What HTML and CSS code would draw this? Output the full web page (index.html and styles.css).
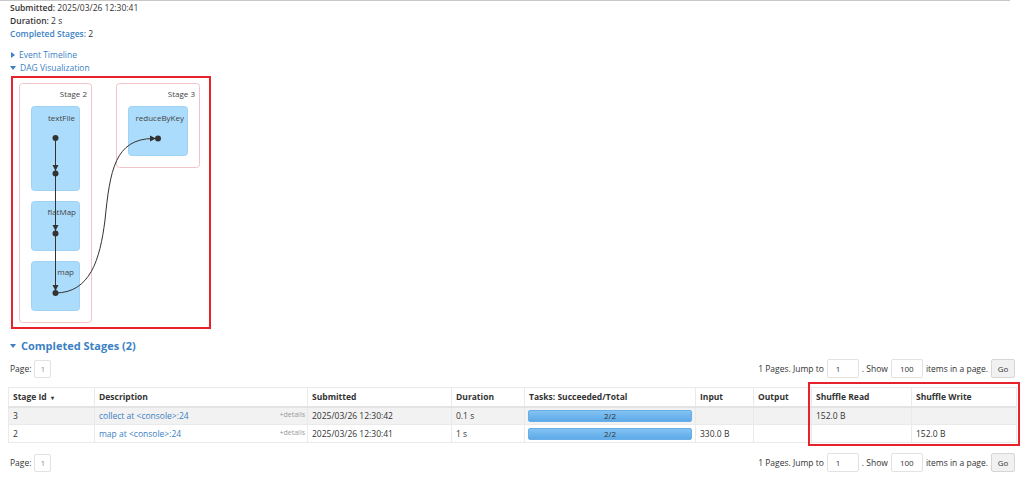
FILE: index.html
```html
<!DOCTYPE html>
<html lang="en">
<head>
    <meta charset="UTF-8">
    <title>Spark Jobs - Details for Job</title>
    <link rel="stylesheet" href="styles.css">
</head>
<body>
<div class="topbar"></div>
<div class="page">
    <ul class="summary">
        <li><strong>Submitted:</strong> 2025/03/26 12:30:41</li>
        <li><strong>Duration:</strong> 2 s</li>
        <li><a class="strong-link" href="#completed">Completed Stages:</a> 2</li>
    </ul>

    <div class="toggles">
        <div class="toggle"><span class="arrow closed"></span><a href="#">Event Timeline</a></div>
        <div class="toggle"><span class="arrow open"></span><a href="#">DAG Visualization</a></div>
    </div>

    <div class="dag">
        <svg width="196" height="249" viewBox="0 0 196 249">
            <g transform="translate(-13,-78)">
                <!-- stage clusters -->
                <rect class="cluster" x="19.5" y="83.5" width="72" height="239" rx="3"/>
                <text class="cluster-label" x="87" y="97">Stage 2</text>
                <rect class="cluster" x="116.5" y="83.5" width="83" height="84" rx="3"/>
                <text class="cluster-label" x="195" y="97">Stage 3</text>

                <!-- rdd nodes -->
                <rect class="node" x="31.5" y="106.5" width="48" height="84" rx="3"/>
                <text class="node-label" x="75" y="121">textFile</text>
                <rect class="node" x="31.5" y="201.5" width="48" height="49" rx="3"/>
                <text class="node-label" x="76" y="215">flatMap</text>
                <rect class="node" x="31.5" y="261.5" width="48" height="49" rx="3"/>
                <text class="node-label" x="74" y="275">map</text>
                <rect class="node" x="128.5" y="106.5" width="59" height="49" rx="3"/>
                <text class="node-label" x="184" y="121">reduceByKey</text>

                <!-- edges -->
                <line class="edge" x1="55.5" y1="138" x2="55.5" y2="293"/>
                <path class="edge" d="M55,293 C90,293 100,260 105,220 C110,170 115,139 153,138.5"/>
                <polygon class="arrowhead" points="52.5,165 58.5,165 55.5,171"/>
                <polygon class="arrowhead" points="52.5,225 58.5,225 55.5,231"/>
                <polygon class="arrowhead" points="52.5,285 58.5,285 55.5,291"/>
                <polygon class="arrowhead" points="150,135.5 150,141.5 156,138.5"/>

                <circle class="dot" cx="55.5" cy="138" r="3"/>
                <circle class="dot" cx="55.5" cy="173.5" r="3"/>
                <circle class="dot" cx="55.5" cy="233.5" r="3"/>
                <circle class="dot" cx="55.5" cy="293" r="3"/>
                <circle class="dot" cx="158" cy="138.5" r="3"/>
            </g>
        </svg>
    </div>

    <h4 class="section" id="completed"><span class="arrow open"></span>Completed Stages (2)</h4>

    <div class="pager">
        <div class="pages">Page: <span class="page-box">1</span></div>
        <form class="jump">
            <span>1 Pages. Jump to</span>
            <input class="num" type="text" value="1">
            <span>. Show</span>
            <input class="num" type="text" value="100">
            <span>items in a page.</span>
            <button type="button" class="go">Go</button>
        </form>
    </div>

    <div class="table-wrap">
        <table class="stages">
            <colgroup>
                <col style="width:86px"><col style="width:213px"><col style="width:144px">
                <col style="width:73px"><col style="width:171px"><col style="width:58px">
                <col style="width:58px"><col style="width:100px"><col style="width:105px">
            </colgroup>
            <thead>
            <tr>
                <th>Stage Id <span class="sort">&#9662;</span></th>
                <th>Description</th>
                <th>Submitted</th>
                <th>Duration</th>
                <th>Tasks: Succeeded/Total</th>
                <th>Input</th>
                <th>Output</th>
                <th>Shuffle Read</th>
                <th>Shuffle Write</th>
            </tr>
            </thead>
            <tbody>
            <tr>
                <td>3</td>
                <td class="desc"><a href="#">collect at &lt;console&gt;:24</a><span class="details">+details</span></td>
                <td>2025/03/26 12:30:42</td>
                <td>0.1 s</td>
                <td><div class="progress"><span>2/2</span></div></td>
                <td></td>
                <td></td>
                <td>152.0 B</td>
                <td></td>
            </tr>
            <tr>
                <td>2</td>
                <td class="desc"><a href="#">map at &lt;console&gt;:24</a><span class="details">+details</span></td>
                <td>2025/03/26 12:30:41</td>
                <td>1 s</td>
                <td><div class="progress"><span>2/2</span></div></td>
                <td>330.0 B</td>
                <td></td>
                <td></td>
                <td>152.0 B</td>
            </tr>
            </tbody>
        </table>
        <div class="highlight"></div>
    </div>

    <div class="pager bottom">
        <div class="pages">Page: <span class="page-box">1</span></div>
        <form class="jump">
            <span>1 Pages. Jump to</span>
            <input class="num" type="text" value="1">
            <span>. Show</span>
            <input class="num" type="text" value="100">
            <span>items in a page.</span>
            <button type="button" class="go">Go</button>
        </form>
    </div>
</div>
</body>
</html>
```

FILE: styles.css
```css
html {
    box-sizing: border-box;
    font-family: "Open Sans", "Noto Sans", sans-serif;
    font-size: 8.5px;
    color: #333;
}

*,
*:before,
*:after {
    box-sizing: inherit;
}

body {
    margin: 0;
    background: #fff;
}

a {
    color: #3b7fc4;
    text-decoration: none;
}

.topbar {
    width: 1010px;
    height: 1px;
    background: #c8c8c8;
}

.page {
    padding: 0 9px;
}

.summary {
    list-style: none;
    margin: 0;
    padding: 0 0 0 1px;
}

.summary li {
    line-height: 13px;
}

.summary strong {
    font-weight: 600;
}

.strong-link {
    font-weight: 600;
}

.toggles {
    margin-top: 8px;
    padding-left: 1px;
}

.toggle {
    line-height: 13px;
    display: flex;
    align-items: center;
}

.arrow {
    display: inline-block;
    width: 0;
    height: 0;
    margin-right: 4px;
}

.arrow.closed {
    border-top: 3px solid transparent;
    border-bottom: 3px solid transparent;
    border-left: 4px solid #3b7fc4;
    margin-left: 1px;
}

.arrow.open {
    border-left: 3px solid transparent;
    border-right: 3px solid transparent;
    border-top: 4px solid #3b7fc4;
}

/* dag visualization */
.dag {
    margin: 2px 0 0 2px;
    width: 200px;
    height: 253px;
    border: 2px solid #e8222c;
}

.dag svg {
    display: block;
}

.cluster {
    fill: #fff;
    stroke: #f3c3ca;
    stroke-width: 1;
}

.cluster-label,
.node-label {
    font-family: "Open Sans", "Noto Sans", sans-serif;
    font-size: 8px;
    fill: #444;
    text-anchor: end;
}

.node {
    fill: #abdcfc;
    stroke: #9fd2f5;
    stroke-width: 1;
}

.edge {
    fill: none;
    stroke: #333;
    stroke-width: 1;
}

.arrowhead,
.dot {
    fill: #333;
}

/* completed stages */
.section {
    margin: 9px 0 0 1px;
    font-size: 11px;
    line-height: 16px;
    font-weight: bold;
    color: #3b7fc4;
    display: flex;
    align-items: center;
}

.section .arrow {
    margin-right: 5px;
}

.pager {
    margin-top: 5px;
    display: flex;
    justify-content: space-between;
    align-items: center;
    height: 19px;
    padding-left: 1px;
}

.pager.bottom {
    margin-top: 10px;
}

.pages {
    display: flex;
    align-items: center;
    gap: 3px;
}

.page-box {
    display: inline-flex;
    justify-content: center;
    align-items: center;
    width: 17px;
    height: 18px;
    border: 1px solid #e2e2e2;
    border-radius: 2px;
    color: #888;
    font-size: 7.5px;
}

.jump {
    display: flex;
    align-items: center;
    margin: 0;
}

.num {
    width: 32px;
    height: 19px;
    margin: 0 3px;
    padding: 0 0 0 8px;
    border: 1px solid #e2e2e2;
    border-radius: 2px;
    font-family: inherit;
    font-size: 8px;
    color: #333;
}

.go {
    margin-left: 3px;
    width: 24px;
    height: 19px;
    padding: 0;
    border: 1px solid #d6d6d6;
    border-radius: 2px;
    background: #f1f1f1;
    font-family: inherit;
    font-size: 8px;
    color: #333;
}

/* stage table */
.table-wrap {
    position: relative;
    margin-top: 9px;
}

.stages {
    border-collapse: collapse;
    table-layout: fixed;
    width: 1008px;
    margin-left: -1px;
}

.stages th,
.stages td {
    text-align: left;
    padding: 0 4px;
    border: 1px solid #eaeaea;
    white-space: nowrap;
    overflow: hidden;
}

.stages th {
    height: 19px;
    font-weight: bold;
    border-bottom: 2px solid #e4e4e4;
}

.stages td {
    height: 18px;
}

.stages tbody tr:nth-child(odd) {
    background: #f2f2f2;
}

.sort {
    font-size: 6px;
    margin-left: 2px;
}

.details {
    float: right;
    color: #999;
    font-size: 7px;
    margin-right: -2px;
}

.progress {
    height: 12px;
    margin-left: -1px;
    margin-right: -1px;
    border-radius: 2px;
    background: linear-gradient(#82c3f3, #5eaae8);
    border: 1px solid #6aaee8;
    display: flex;
    justify-content: center;
    align-items: center;
    font-size: 8px;
    color: #333;
}

.highlight {
    position: absolute;
    left: 799px;
    top: -5px;
    width: 212px;
    height: 64px;
    border: 2px solid #e8222c;
    pointer-events: none;
}
```
